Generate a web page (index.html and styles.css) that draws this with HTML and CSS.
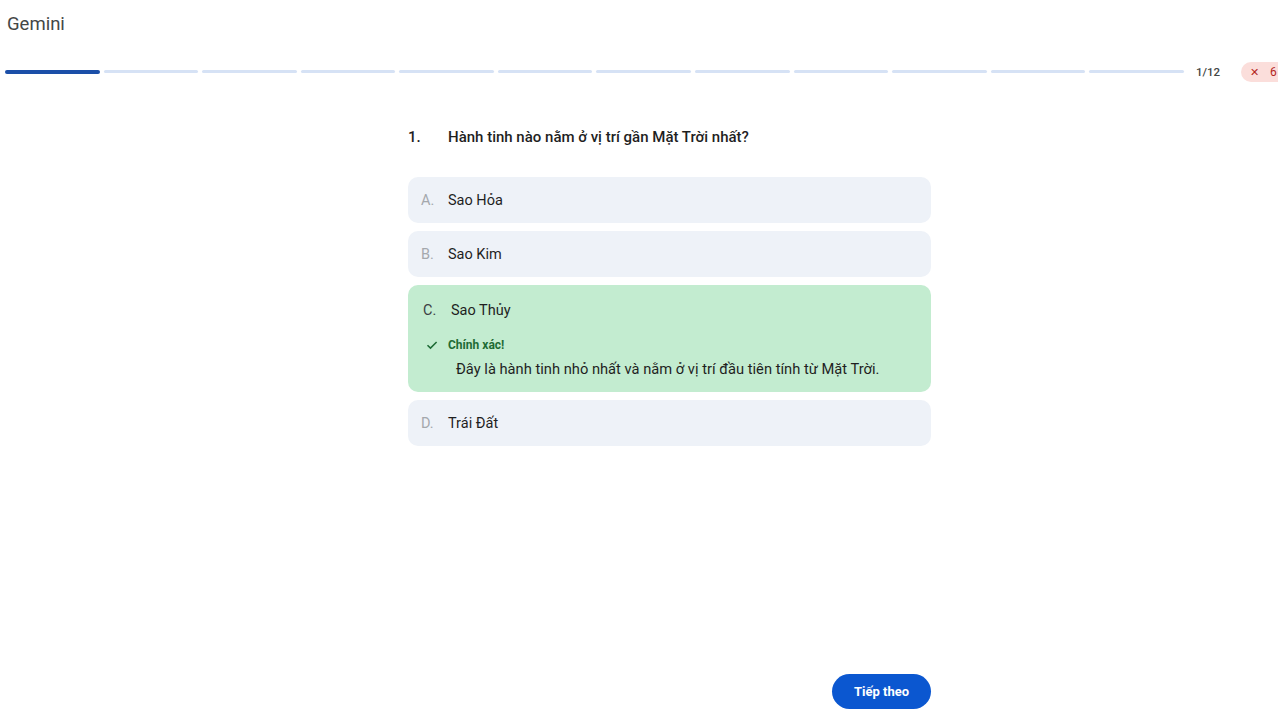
FILE: index.html
```html
<!DOCTYPE html>
<html lang="vi">
<head>
<meta charset="utf-8">
<title>Gemini</title>
<link rel="stylesheet" href="styles.css">
</head>
<body>
<div class="page">
  <header class="topbar">
    <div class="brand">Gemini</div>
  </header>
  <div class="progress">
    <div class="segments">
      <span class="seg done"></span><span class="seg"></span><span class="seg"></span><span class="seg"></span>
      <span class="seg"></span><span class="seg"></span><span class="seg"></span><span class="seg"></span>
      <span class="seg"></span><span class="seg"></span><span class="seg"></span><span class="seg"></span>
    </div>
    <span class="count">1/12</span>
    <span class="badge"><span class="x">✕</span><span>6</span></span>
  </div>
  <main class="quiz">
    <div class="question"><span class="qnum">1.</span><span>Hành tinh nào nằm ở vị trí gần Mặt Trời nhất?</span></div>
    <div class="options">
      <div class="option"><span class="letter">A.</span><span>Sao Hỏa</span></div>
      <div class="option"><span class="letter">B.</span><span>Sao Kim</span></div>
      <div class="option correct">
        <div class="opt-row"><span class="letter">C.</span><span>Sao Thủy</span></div>
        <div class="feedback">
          <div class="fb-head">
            <svg class="check" width="12" height="12" viewBox="0 0 12 12"><path d="M1.5 6.2 L4.5 9.1 L10.6 3" fill="none" stroke="#1e6b35" stroke-width="1.5"/></svg>
            <span>Chính xác!</span>
          </div>
          <div class="fb-text">Đây là hành tinh nhỏ nhất và nằm ở vị trí đầu tiên tính từ Mặt Trời.</div>
        </div>
      </div>
      <div class="option"><span class="letter">D.</span><span>Trái Đất</span></div>
    </div>
  </main>
  <footer class="footer">
    <button class="next">Tiếp theo</button>
  </footer>
</div>
</body>
</html>
```
FILE: styles.css
```css
html, body {
  margin: 0;
  padding: 0;
  overflow: hidden;
  background: #ffffff;
}
body {
  font-family: Roboto, "Noto Sans", "Liberation Sans", sans-serif;
  color: #1f1f1f;
}
.page {
  width: 1339px;
  height: 713px;
  display: flex;
  flex-direction: column;
}
.topbar {
  padding: 14px 0 0 7px;
}
.brand {
  font-size: 18.5px;
  line-height: 20px;
  color: #444746;
}
.progress {
  margin-top: 30px;
  height: 16px;
  display: flex;
  align-items: center;
  padding-left: 5px;
}
.segments {
  width: 1179px;
  flex-shrink: 0;
  display: flex;
  gap: 4px;
}
.seg {
  flex: 1;
  height: 3px;
  border-radius: 2px;
  background: #d6e2f5;
}
.seg.done {
  height: 4px;
  background: #1b4fa8;
}
.count {
  margin-left: 12px;
  font-size: 11.5px;
  font-weight: 500;
  color: #444746;
  flex-shrink: 0;
}
.badge {
  margin-left: 21px;
  flex-shrink: 0;
  display: flex;
  align-items: center;
  gap: 11px;
  background: #fbdedb;
  color: #b3261e;
  font-size: 12px;
  height: 20px;
  padding: 0 12px 0 9px;
  border-radius: 10px;
}
.badge .x {
  font-size: 11px;
}
.quiz {
  width: 523px;
  margin: 47px auto 0;
}
.question {
  display: flex;
  font-size: 15px;
  font-weight: 500;
  line-height: 20px;
  margin-bottom: 30px;
}
.qnum {
  width: 40px;
}
.options {
  display: flex;
  flex-direction: column;
  gap: 8px;
}
.option {
  background: #eef2f8;
  border-radius: 10px;
  min-height: 46px;
  display: flex;
  align-items: center;
  padding: 0 13px;
  font-size: 14.5px;
  box-sizing: border-box;
}
.letter {
  width: 27px;
  color: #a4a8ad;
}
.option.correct {
  background: #c3ecd0;
  display: block;
  padding: 16px 15px 13px;
}
.opt-row {
  display: flex;
  line-height: 20px;
}
.correct .letter {
  width: 28px;
  color: #3c4043;
}
.feedback {
  margin-top: 15px;
}
.fb-head {
  display: flex;
  align-items: center;
  line-height: 18px;
  font-size: 12px;
  font-weight: 700;
  color: #1e6b35;
}
.check {
  margin-left: 3px;
  margin-right: 10px;
}
.fb-text {
  margin-top: 5px;
  padding-left: 33px;
  line-height: 20px;
  font-size: 14.7px;
  color: #1f1f1f;
}
.footer {
  margin-top: auto;
  width: 523px;
  margin-left: auto;
  margin-right: auto;
  display: flex;
  justify-content: flex-end;
  padding-bottom: 4px;
}
.next {
  height: 35px;
  width: 99px;
  border: none;
  border-radius: 18px;
  background: #0b57d0;
  color: #ffffff;
  font-family: Roboto, "Noto Sans", sans-serif;
  font-size: 13px;
  font-weight: 700;
}
```
